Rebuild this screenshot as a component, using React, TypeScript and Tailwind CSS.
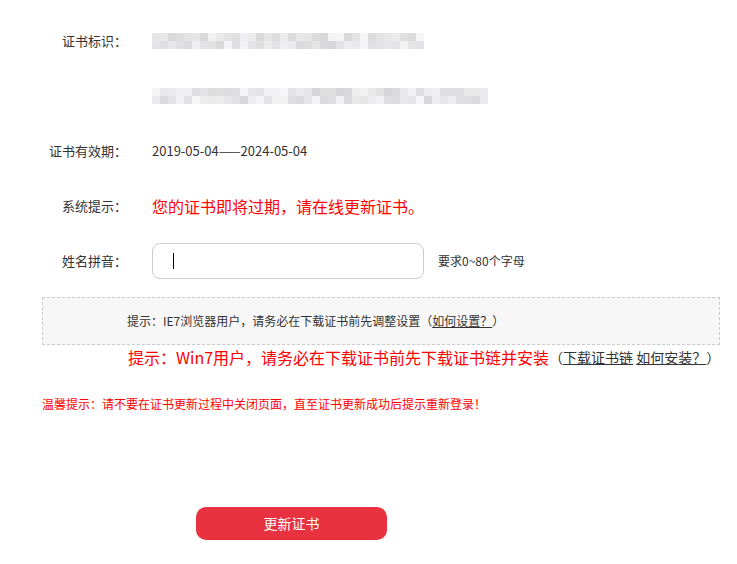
const font = "font-['Microsoft_YaHei','Noto_Sans_CJK_SC',sans-serif]";

// mosaic for the blurred certificate id
function mosaic(cols: number, seed: number) {
  const cells: string[] = [];
  let s = seed;
  for (let i = 0; i < cols * 2; i++) {
    s = (s * 9301 + 49297) % 233280;
    const v = 205 + Math.floor((s / 233280) * 40);
    cells.push(`rgb(${v},${v},${v + 2})`);
  }
  return cells;
}

function Blurred({ cols, seed }: { cols: number; seed: number }) {
  const cells = mosaic(cols, seed);
  return (
    <div className="grid gap-0 opacity-80" style={{ gridTemplateColumns: `repeat(${cols}, 8px)` }}>
      {cells.map((c, i) => (
        <div key={i} className="h-[8px] w-[8px]" style={{ background: c }} />
      ))}
    </div>
  );
}

function Row({ label, children }: { label?: string; children: React.ReactNode }) {
  return (
    <div className="flex h-[55px] items-center">
      <div className="w-[127px] text-right text-[13px] text-[#333]">{label}</div>
      <div className="ml-[25px] flex items-center">{children}</div>
    </div>
  );
}

export default function App() {
  return (
    <div className={`min-h-screen bg-white ${font}`}>
      <div className="pt-[13px]">
        <Row label="证书标识：">
          <Blurred cols={34} seed={7} />
        </Row>
        <Row>
          <Blurred cols={42} seed={19} />
        </Row>
        <Row label="证书有效期：">
          <span className="text-[13px] text-[#333]">2019-05-04——2024-05-04</span>
        </Row>
        <Row label="系统提示：">
          <span className="text-[16px] text-[#ff0000]">您的证书即将过期，请在线更新证书。</span>
        </Row>
        <Row label="姓名拼音：">
          <div className="flex h-[36px] w-[272px] items-center rounded-[8px] border border-[#ccc] pl-[20px]">
            <span className="h-[16px] w-px bg-black" />
          </div>
          <span className="ml-[14px] text-[12px] text-[#333]">要求0~80个字母</span>
        </Row>
      </div>

      <div className="ml-[42px] mt-[9px] flex h-[48px] w-[678px] items-center border border-dashed border-[#ccc] bg-[#f7f7f7] pl-[84px] text-[12px] text-[#333]">
        提示：IE7浏览器用户，请务必在下载证书前先调整设置（<span className="underline">如何设置？</span>）
      </div>

      <div className="ml-[128px] flex h-[24px] items-center whitespace-nowrap">
        <span className="text-[16px] text-[#ff0000]">提示：Win7用户，请务必在下载证书前先下载证书链并安装</span>
        <span className="text-[14px] text-[#333]">
          （<span className="underline">下载证书链</span> <span className="underline">如何安装？</span>）
        </span>
      </div>

      <div className="ml-[42px] mt-[25px] h-[20px] text-[12px] leading-[20px] text-[#ff0000]">
        温馨提示：请不要在证书更新过程中关闭页面，直至证书更新成功后提示重新登录！
      </div>

      <button className="ml-[196px] mt-[93px] flex h-[33px] w-[191px] items-center justify-center rounded-[10px] bg-[#e8323f] text-[14px] text-white">
        更新证书
      </button>
    </div>
  );
}
